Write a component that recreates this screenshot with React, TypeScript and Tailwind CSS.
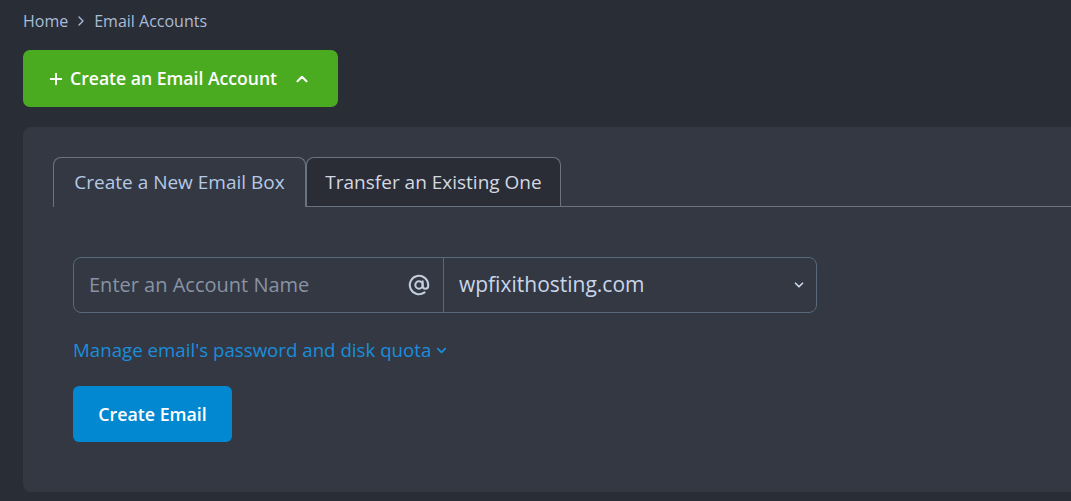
import { ChevronRight, ChevronUp, ChevronDown, Plus, AtSign } from 'lucide-react'

const font = { fontFamily: '"Open Sans", "Noto Sans", sans-serif' }

function Breadcrumb() {
    return (
        <nav className="flex items-center h-[42px] text-[16px] text-[#a9bcd8]">
            <span>Home</span>
            <ChevronRight className="h-4 w-4 mx-[5px]" strokeWidth={2} />
            <span>Email Accounts</span>
        </nav>
    )
}

function Tabs() {
    return (
        <div className="flex border-b border-[#6c7380] ml-[30px]">
            <div className="-mb-px h-[50px] w-[253px] flex items-center justify-center rounded-t-[8px] border border-b-0 border-[#6c7380] bg-[#343843] text-[19px] text-[#b5c9e6]">
                Create a New Email Box
            </div>
            <div className="h-[49px] w-[255px] flex items-center justify-center rounded-t-[8px] border border-b-0 border-[#6c7380] bg-[#2a2d36] text-[19px] text-[#d3d8e0]">
                Transfer an Existing One
            </div>
        </div>
    )
}

export default function App() {
    return (
        <div className="min-h-[501px] bg-[#292d36] pl-[23px] pb-[9px] overflow-hidden" style={font}>
            <Breadcrumb />
            <button className="mt-[8px] h-[57px] w-[315px] flex items-center rounded-[7px] bg-[#4aab21] pl-[24px] text-white text-[17.6px] font-semibold">
                <Plus className="h-[18px] w-[18px] mr-[5px]" strokeWidth={2.5} />
                <span>Create an Email Account</span>
                <ChevronUp className="h-[18px] w-[18px] ml-[16px]" strokeWidth={2.75} />
            </button>
            <div className="mt-[20px] -mr-[20px] rounded-[8px] bg-[#343843] pt-[30px] pb-[50px]">
                <Tabs />
                <div className="px-[50px] pt-[50px]">
                    <div className="flex h-[56px] w-[744px] rounded-[8px] border border-[#56697a]">
                        <div className="flex flex-1 items-center pl-[15px] pr-[13px] border-r border-[#56697a]">
                            <span className="flex-1 text-[20px] text-[#8893a3]">Enter an Account Name</span>
                            <AtSign className="h-[22px] w-[22px] text-[#c2cede]" strokeWidth={2.25} />
                        </div>
                        <div className="flex w-[372px] items-center pl-[15px] pr-[10px]">
                            <span className="flex-1 text-[21px] text-[#c8d6ea]">wpfixithosting.com</span>
                            <ChevronDown className="h-[14px] w-[14px] text-[#c8d6ea]" strokeWidth={3} />
                        </div>
                    </div>
                    <div className="mt-[23px] flex items-center text-[18.7px] text-[#1a8ddb]">
                        <span>Manage email's password and disk quota</span>
                        <ChevronDown className="h-[15px] w-[15px] ml-[3px]" strokeWidth={2.75} />
                    </div>
                    <button className="mt-[22px] h-[56px] w-[159px] rounded-[6px] bg-[#0288d1] text-white text-[17.8px] font-semibold">
                        Create Email
                    </button>
                </div>
            </div>
        </div>
    )
}
